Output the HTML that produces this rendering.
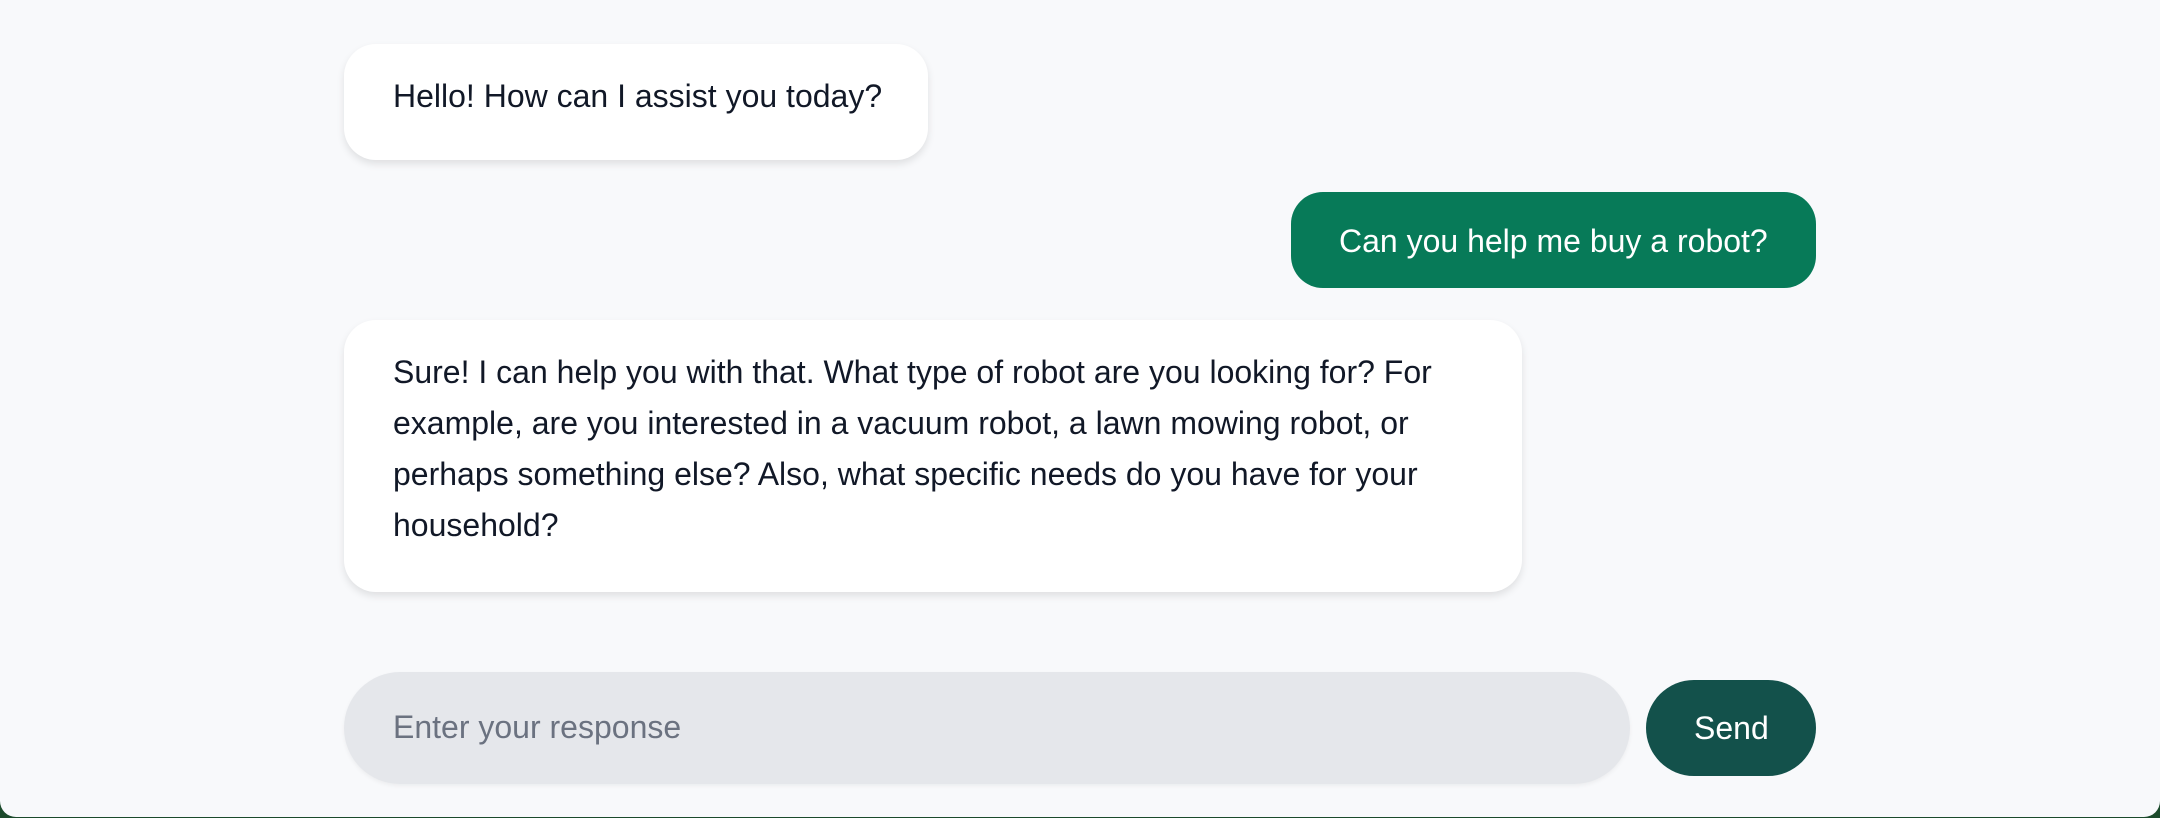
<!DOCTYPE html>
<html><head><meta charset="utf-8"><style>
html,body{margin:0;padding:0;width:2160px;height:818px;overflow:hidden;background:#1b4a2b;}
.page{position:absolute;left:0;top:0;width:2160px;height:817px;background:#f8f9fb;border-radius:0 0 16px 16px;}
.b{position:absolute;border-radius:32px;}
.white{background:#fff;box-shadow:0 4px 8px rgba(0,0,0,0.10);}
.t{position:absolute;font-family:"Liberation Sans",Arial,sans-serif;font-size:32px;line-height:40px;white-space:nowrap;color:#111827;}
</style></head><body>
<div class="page">
  <div class="b white" style="left:344px;top:44px;width:584px;height:116px;"></div>
  <div class="t" style="left:393px;top:76px;">Hello! How can I assist you today?</div>

  <div class="b" style="left:1291px;top:192px;width:525px;height:96px;background:#077a58;"></div>
  <div class="t" style="left:1339px;top:221px;color:#fff;">Can you help me buy a robot?</div>

  <div class="b white" style="left:344px;top:320px;width:1178px;height:272px;"></div>
  <div class="t" style="left:393px;top:352px;">Sure! I can help you with that. What type of robot are you looking for? For</div>
  <div class="t" style="left:393px;top:403px;">example, are you interested in a vacuum robot, a lawn mowing robot, or</div>
  <div class="t" style="left:393px;top:454px;">perhaps something else? Also, what specific needs do you have for your</div>
  <div class="t" style="left:393px;top:505px;">household?</div>

  <div class="b" style="left:344px;top:672px;width:1286px;height:112px;border-radius:56px;background:#e5e7eb;box-shadow:0 2px 4px rgba(0,0,0,0.05);"></div>
  <div class="t" style="left:393px;top:707px;color:#6b7280;">Enter your response</div>

  <div class="b" style="left:1646px;top:680px;width:170px;height:96px;border-radius:48px;background:#13514b;"></div>
  <div class="t" style="left:1694px;top:708px;color:#fff;">Send</div>
</div>
</body></html>
